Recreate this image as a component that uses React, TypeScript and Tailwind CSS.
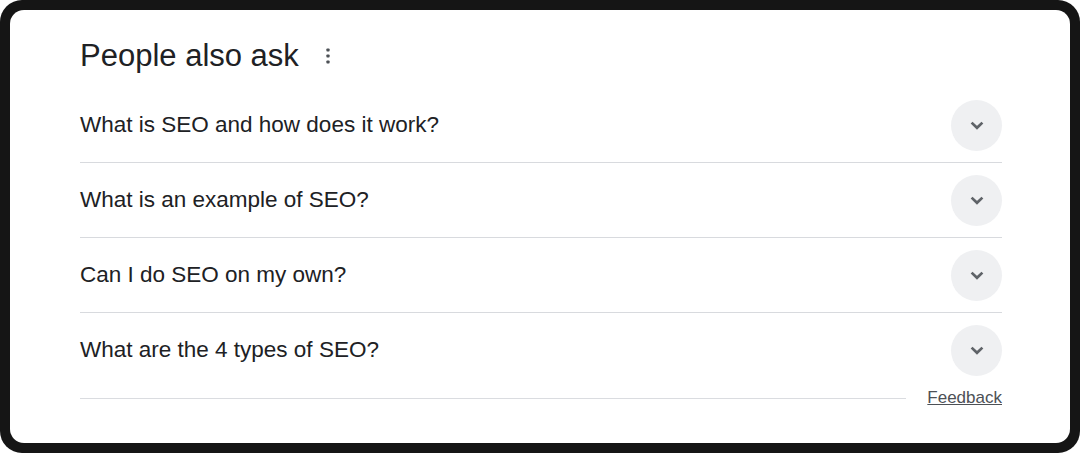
import React from "react";

const questions = [
  "What is SEO and how does it work?",
  "What is an example of SEO?",
  "Can I do SEO on my own?",
  "What are the 4 types of SEO?",
];

const ExpandMore = () => (
  <svg width="24" height="24" viewBox="0 0 24 24" fill="none">
    <polyline
      points="6.6,9.6 12,14.8 17.4,9.6"
      stroke="#5f6368"
      strokeWidth="2.7"
      strokeLinecap="butt"
      strokeLinejoin="miter"
    />
  </svg>
);

const MoreVert = () => (
  <svg width="24" height="24" viewBox="0 0 24 24" fill="#4d5156">
    <rect x="10.4" y="4.4" width="3.2" height="3.2" rx="0.8" />
    <rect x="10.4" y="10.4" width="3.2" height="3.2" rx="0.8" />
    <rect x="10.4" y="16.4" width="3.2" height="3.2" rx="0.8" />
  </svg>
);

export default function App() {
  return (
    <div
      className="w-[1080px] h-[453px] bg-[#151515] rounded-[22px] p-[10px]"
      style={{ fontFamily: '"Liberation Sans", Arial, sans-serif' }}
    >
      <div className="h-full bg-white rounded-[14px] pt-[31px] pl-[70px] pr-[68px]">
        {/* header */}
        <div className="flex items-center h-[30px]">
          <h2 className="text-[31px] leading-[30px] text-[#202124]">People also ask</h2>
          <div className="ml-[17px]">
            <MoreVert />
          </div>
        </div>

        {/* questions */}
        <div className="mt-[17px]">
          {questions.map((q, i) => (
            <div key={q}>
              <div className="flex items-center justify-between h-[74px]">
                <span className="text-[22.5px] leading-[22.5px] text-[#202124]">{q}</span>
                <div className="w-[51px] h-[51px] rounded-full bg-[#eff0f2] flex items-center justify-center">
                  <ExpandMore />
                </div>
              </div>
              {i < questions.length - 1 && <div className="h-px bg-[#d8dade]" />}
            </div>
          ))}
        </div>

        {/* footer */}
        <div className="flex items-center mt-[1px] h-[20px]">
          <div className="flex-1 h-px bg-[#dadce0]" />
          <a className="ml-[21px] text-[17px] leading-[20px] text-[#4d5156] underline">Feedback</a>
        </div>
      </div>
    </div>
  );
}
